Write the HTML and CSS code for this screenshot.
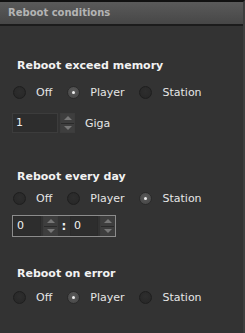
FILE: index.html
```html
<!DOCTYPE html>
<html lang="en">
  <head>
    <meta charset="UTF-8" />
    <title>Reboot conditions</title>
    <link rel="stylesheet" href="styles.css">
  </head>
  <body>
    <div class="panel">
      <div class="panel-header">Reboot conditions</div>
      <div class="panel-body">
        <div class="group first">
          <h3>Reboot exceed memory</h3>
          <div class="radio-row">
            <label class="radio"><span class="dot"></span>Off</label>
            <label class="radio"><span class="dot checked"></span>Player</label>
            <label class="radio"><span class="dot"></span>Station</label>
          </div>
          <div class="spin-row">
            <div class="spinner">
              <span class="spin-input">1</span>
              <span class="spin-btns"><span class="up"></span><span class="down"></span></span>
            </div>
            <span class="unit">Giga</span>
          </div>
        </div>

        <div class="group second">
          <h3>Reboot every day</h3>
          <div class="radio-row">
            <label class="radio"><span class="dot"></span>Off</label>
            <label class="radio"><span class="dot"></span>Player</label>
            <label class="radio"><span class="dot checked"></span>Station</label>
          </div>
          <div class="spin-row">
            <div class="time-box">
              <div class="spinner small">
                <span class="spin-input">0</span>
                <span class="spin-btns"><span class="up"></span><span class="down"></span></span>
              </div>
              <span class="colon">:</span>
              <div class="spinner small">
                <span class="spin-input">0</span>
                <span class="spin-btns"><span class="up"></span><span class="down"></span></span>
              </div>
            </div>
          </div>
        </div>

        <div class="group third">
          <h3>Reboot on error</h3>
          <div class="radio-row">
            <label class="radio"><span class="dot"></span>Off</label>
            <label class="radio"><span class="dot checked"></span>Player</label>
            <label class="radio"><span class="dot"></span>Station</label>
          </div>
        </div>
      </div>
    </div>
  </body>
</html>
```

FILE: styles.css
```css
html,
body {
  margin: 0;
  padding: 0;
  background-color: #333333;
  font-family: "DejaVu Sans", Verdana, sans-serif;
}
.panel {
  width: 245px;
  height: 333px;
  box-sizing: border-box;
  border-top: 2px solid #111111;
  border-right: 2px solid #3e3e3e;
  background-color: #333333;
  overflow: hidden;
}
.panel-header {
  height: 22px;
  line-height: 22px;
  padding-left: 8px;
  background: linear-gradient(#5a5a5a, #474747);
  border-bottom: 2px solid #1c1c1c;
  color: #b4b4b4;
  font-size: 10px;
  font-weight: bold;
}
.panel-body {
  padding: 0 0 0 13px;
}
.group h3 {
  margin: 0;
  height: 14px;
  line-height: 14px;
  font-size: 11px;
  font-weight: bold;
  color: #f2f2f2;
  padding-left: 4px;
}
.group.first {
  padding-top: 33px;
}
.group.second {
  padding-top: 37px;
}
.group.third {
  padding-top: 30px;
}
.radio-row {
  display: flex;
  align-items: center;
  height: 20px;
  margin-top: 9px;
}
.group.second .radio-row {
  margin-top: 4px;
}
.group.third .radio-row {
  margin-top: 6px;
}
.radio {
  display: flex;
  align-items: center;
  font-size: 11px;
  color: #e6e6e6;
  margin-right: 15px;
}
.dot {
  position: relative;
  width: 11px;
  height: 11px;
  border-radius: 50%;
  border: 1px solid #1e1e1e;
  background: radial-gradient(circle at 50% 40%, #2e2e2e, #262626);
  margin-right: 10px;
}
.dot.checked {
  background: radial-gradient(circle at 50% 40%, #5a5a5a, #444444);
  border-color: #2a2a2a;
}
.dot.checked::after {
  content: "";
  position: absolute;
  left: 4px;
  top: 4px;
  width: 3px;
  height: 3px;
  border-radius: 50%;
  background-color: #f0f0f0;
}
.spin-row {
  display: flex;
  align-items: center;
  margin-top: 11px;
  margin-left: -1px;
}
.group.second .spin-row {
  margin-top: 7px;
}
.spinner {
  display: flex;
  height: 20px;
}
.spin-input {
  width: 41px;
  height: 18px;
  line-height: 18px;
  border: 1px solid #3c3c3c;
  background-color: #2d2d2d;
  color: #f0f0f0;
  font-size: 11px;
  padding-left: 3px;
  box-sizing: content-box;
  margin-right: 2px;
}
.spin-btns {
  display: flex;
  flex-direction: column;
  width: 15px;
  height: 20px;
  border: 1px solid #3c3c3c;
  box-sizing: border-box;
}
.spin-btns span {
  flex: 1;
  background-color: #3e3e3e;
  position: relative;
}
.spin-btns .up {
  border-bottom: 1px solid #2a2a2a;
}
.spin-btns .up::after,
.spin-btns .down::after {
  content: "";
  position: absolute;
  left: 3px;
  border-left: 4px solid transparent;
  border-right: 4px solid transparent;
}
.spin-btns .up::after {
  top: 2px;
  border-bottom: 4px solid #777777;
}
.spin-btns .down::after {
  top: 2px;
  border-top: 4px solid #777777;
}
.unit {
  margin-left: 10px;
  font-size: 11px;
  color: #e6e6e6;
}
.time-box {
  display: flex;
  align-items: center;
  border: 1px solid #8c8c8c;
  height: 20px;
}
.spinner.small .spin-input {
  width: 23px;
  border-color: #2a2a2a;
}
.colon {
  width: 12px;
  text-align: center;
  font-weight: bold;
  font-size: 12px;
  color: #eeeeee;
}
```
